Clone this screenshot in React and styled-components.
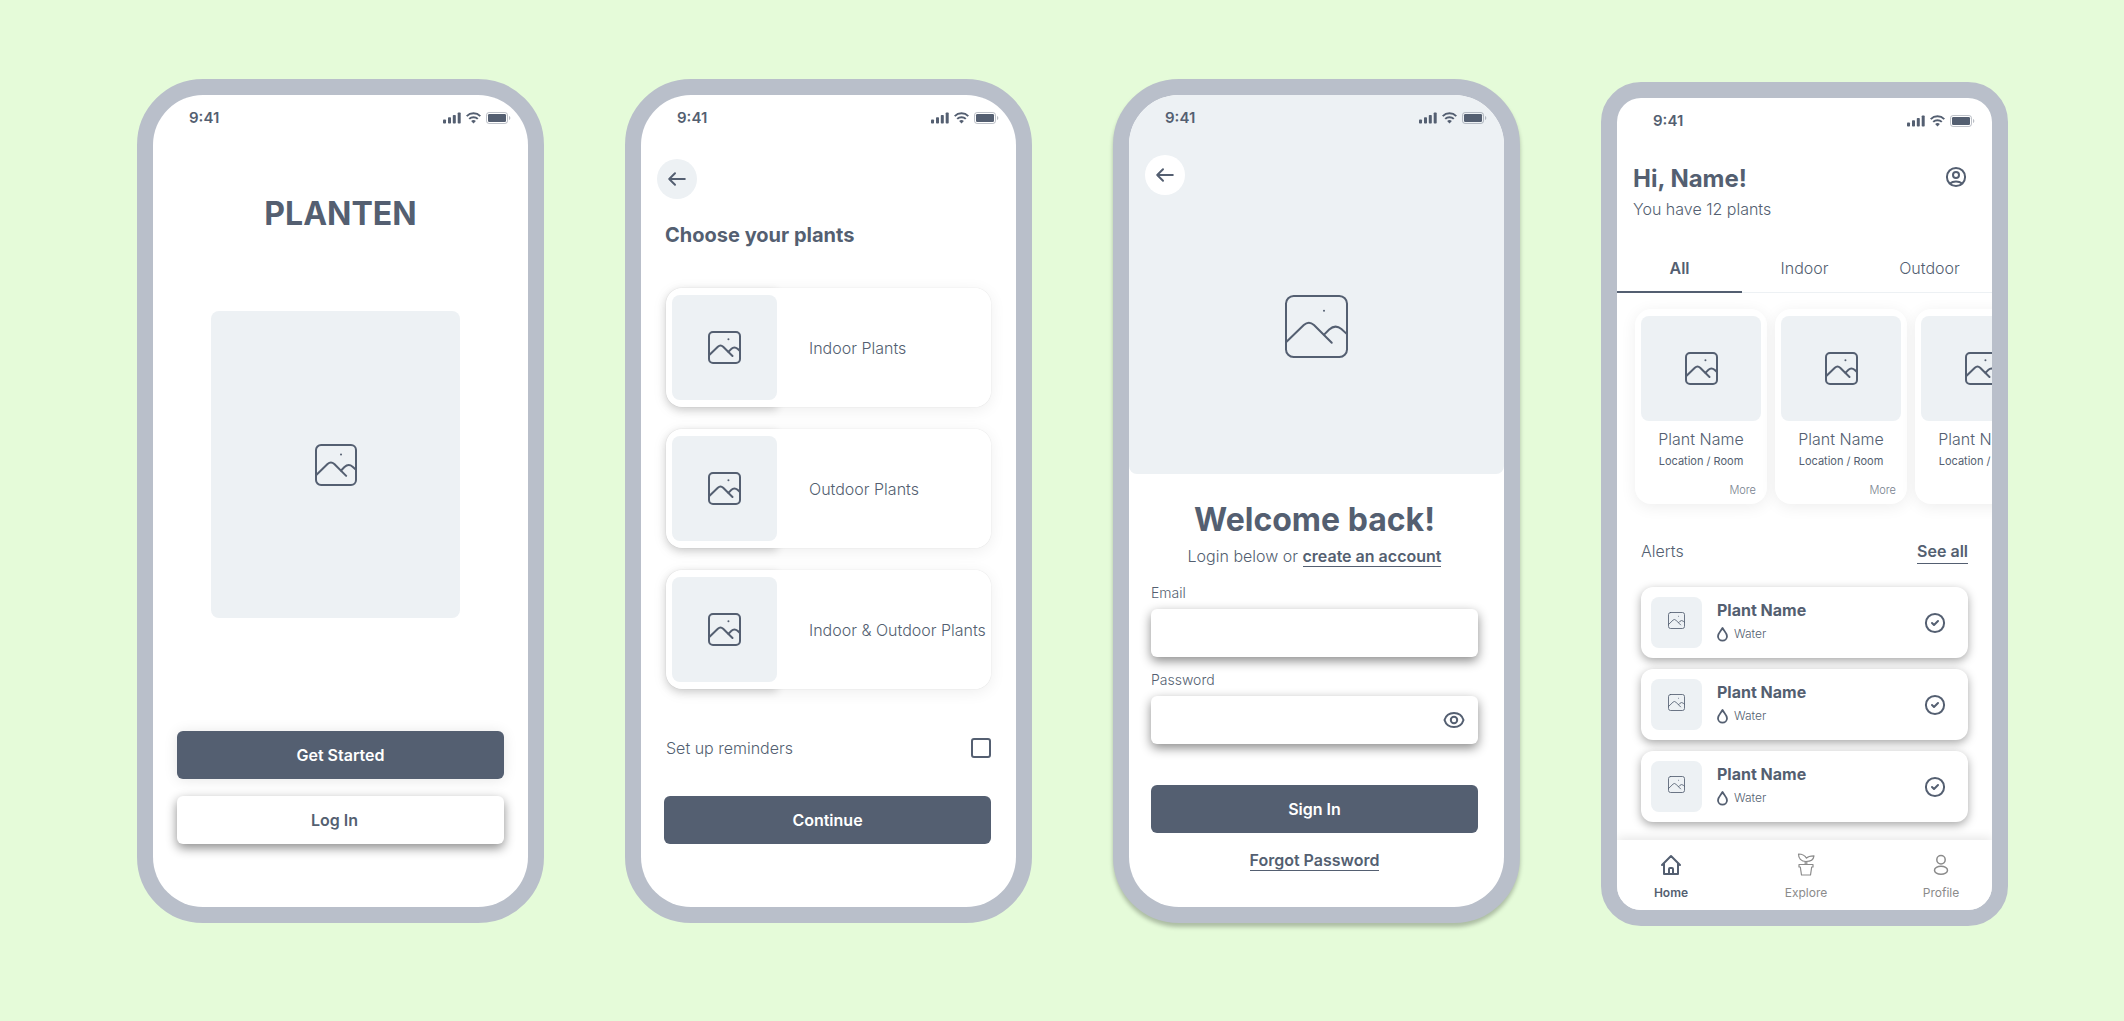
import React, { useState } from "react";
import styled, { createGlobalStyle, css } from "styled-components";

const ink = "#545f71";
const frame = "#b9bfca";
const tint = "#edf1f4";

const GlobalStyle = createGlobalStyle`
  * { box-sizing: border-box; }
  body {
    margin: 0;
    background: #e5fbd9;
    color: ${ink};
    font-family: Inter, "Liberation Sans", sans-serif;
    font-size: 16px;
    line-height: 24px;
  }
  h1, h2, h3, p, ul { margin: 0; padding: 0; }
  button, input { font: inherit; color: inherit; }
`;

const Board = styled.main`
  display: grid;
  grid-template-columns: repeat(auto-fit, minmax(380px, 1fr));
  gap: 81px;
  align-items: start;
  min-height: 100vh;
  padding: 79px 116px 79px 137px;
`;

const Phone = styled.section`
  display: flex;
  min-height: 844px;
  border: 16px solid ${frame};
  border-radius: ${(p) => (p.$square ? "40px" : "66px")};
  background: ${frame};
  margin-top: ${(p) => (p.$square ? "3px" : "0")};
  box-shadow: ${(p) => (p.$raised ? "0 4px 4px rgba(0, 0, 0, 0.25)" : "none")};
`;

const Screen = styled.div`
  display: flex;
  flex-direction: column;
  flex: 1;
  min-width: 0;
  overflow: hidden;
  border-radius: ${(p) => (p.$square ? "24px" : "50px")};
  background: #fff;
`;

const StatusRow = styled.div`
  display: flex;
  align-items: center;
  justify-content: space-between;
  height: 46px;
  padding: 0 17px 0 36px;
  font-size: 15px;
  font-weight: 600;
  flex: none;
`;

const StatusIcons = styled.div`
  display: flex;
  align-items: center;
  gap: 5px;
`;

function StatusBar() {
  return (
    <StatusRow>
      <span>9:41</span>
      <StatusIcons>
        <svg width="18" height="12" viewBox="0 0 18 12" fill={ink} aria-hidden="true">
          <rect x="0" y="7.5" width="3" height="4" rx="0.8" />
          <rect x="5" y="5.3" width="3" height="6.2" rx="0.8" />
          <rect x="9.8" y="3" width="3" height="8.5" rx="0.8" />
          <rect x="14.7" y="0.5" width="3" height="11" rx="0.8" />
        </svg>
        <svg width="15" height="12" viewBox="0 0 15 12" fill="none" stroke={ink} strokeWidth="2" aria-hidden="true">
          <path d="M0.7 4.1a9.8 9.8 0 0 1 13.6 0" />
          <path d="M3.2 6.9a6.2 6.2 0 0 1 8.6 0" />
          <path d="M5.1 9.1a3.5 3.5 0 0 1 4.8 0L7.5 11.4z" fill={ink} stroke="none" />
        </svg>
        <svg width="25" height="12" viewBox="0 0 25 12" aria-hidden="true">
          <rect x="0.5" y="0.5" width="21" height="11" rx="2.6" fill="none" stroke={ink} strokeOpacity="0.38" />
          <rect x="2" y="2" width="18" height="8" rx="1.2" fill={ink} />
          <path d="M23 4v4c.8-.3 1.3-1.1 1.3-2S23.8 4.300 23 4z" fill={ink} fillOpacity="0.4" />
        </svg>
      </StatusIcons>
    </StatusRow>
  );
}

/* Placeholder picture; the outline keeps its weight at every size. */
function Picture({ size, weight = 2, faint }) {
  return (
    <svg width={size} height={size} viewBox="0 0 62 62" fill="none" stroke={ink} strokeLinecap="round" strokeLinejoin="round" strokeOpacity={faint ? 0.85 : 1} aria-hidden="true">
      <g strokeWidth={(weight * 62) / size}>
        <rect x={(weight * 31) / size} y={(weight * 31) / size} width={62 - (weight * 62) / size} height={62 - (weight * 62) / size} rx="7.5" />
        <path d="M1.5 46L18.5 29.5Q23.5 25 28.5 29.5L46 47" />
        <path d="M38.5 39L43.5 34Q49.5 28.5 55.5 33.5L61 38.5" />
        <path d="M38.4 15.5v.01" />
      </g>
    </svg>
  );
}

const Thumb = styled.div`
  display: flex;
  align-items: center;
  justify-content: center;
  flex: none;
  width: ${(p) => p.$w};
  height: ${(p) => p.$h};
  border-radius: 8px;
  background: ${tint};
`;

const deep = "0 4px 11px rgba(0, 0, 0, 0.46)";

const Button = styled.button`
  display: block;
  width: 100%;
  height: 48px;
  padding: 0;
  border: 0;
  border-radius: 6px;
  background: ${ink};
  color: #fff;
  font-weight: 600;
  cursor: pointer;
  ${(p) => p.$glow && css`box-shadow: 0 1px 14px rgba(0, 0, 0, 0.1);`}
  ${(p) => p.$light && css`
    padding-right: 12px;
    background: #fff;
    color: ${ink};
    box-shadow: ${deep};
  `}
`;

const Title = styled.h1`
  font-size: 32px;
  line-height: 40px;
  font-weight: 700;
  text-align: center;
`;

const TextLink = styled.a`
  color: ${ink};
  font-weight: 600;
  text-decoration: none;
  border-bottom: 1px solid ${ink};
`;

/* Welcome */

const Hero = styled.div`
  display: flex;
  margin: 77px 68px 113px 58px;
`;

const Stack = styled.div`
  display: flex;
  flex-direction: column;
  gap: 17px;
  padding: ${(p) => (p.$left ? "0 25px 63px 23px" : "0 24px 63px")};
`;

const TitleBlock = styled.div`
  padding-top: 53px;
`;

function Welcome() {
  return (
    <Phone>
      <Screen>
        <StatusBar />
        <TitleBlock>
          <Title>PLANTEN</Title>
        </TitleBlock>
        <Hero>
          <Thumb $w="100%" $h="307px">
            <Picture size={42} />
          </Thumb>
        </Hero>
        <Stack>
          <Button $glow>Get Started</Button>
          <Button $light>Log In</Button>
        </Stack>
      </Screen>
    </Phone>
  );
}

/* Plant choice */

const BackButton = styled.button`
  display: flex;
  align-items: center;
  justify-content: center;
  width: 40px;
  height: 40px;
  margin: 0 16px;
  padding: 0;
  border: 0;
  border-radius: 50%;
  background: ${(p) => (p.$light ? "#fff" : tint)};
  cursor: pointer;
`;

function Back({ light }) {
  return (
    <BackButton $light={light} aria-label="Back">
      <svg width="24" height="24" viewBox="0 0 24 24" fill="none" stroke={ink} strokeWidth="2" strokeLinecap="round" strokeLinejoin="round" aria-hidden="true">
        <path d="M19.8 12H4.2M10 6.2L4.2 12L10 17.8" />
      </svg>
    </BackButton>
  );
}

const ChooseBody = styled.div`
  display: flex;
  flex-direction: column;
  padding-top: 18px;
`;

const ChooseTitle = styled.h2`
  margin: 24px 24px 0;
  font-size: 20px;
  line-height: 24px;
  font-weight: 700;
`;

const Choices = styled.ul`
  display: grid;
  gap: 22px;
  margin: 41px 25px 0;
  list-style: none;
`;

const Choice = styled.li`
  display: flex;
  height: 119px;
  border-radius: 16px;
  background: #fff;
  box-shadow: 0 3px 16px rgba(0, 0, 0, 0.07), 0 0 1px rgba(0, 0, 0, 0.2);
`;

const ChoicePicture = styled.div`
  display: flex;
  align-items: center;
  flex: none;
  width: 111px;
  padding-left: 6px;
  border-radius: 16px 0 0 16px;
  background: #fff;
  box-shadow: 0 3px 8px rgba(0, 0, 0, 0.16);
`;

const ChoiceName = styled.div`
  display: flex;
  align-items: center;
  flex: 1;
  padding-left: 32px;
  border-radius: 0 16px 16px 0;
  background: #fff;
  font-weight: 300;
  white-space: nowrap;
`;

const Reminder = styled.label`
  display: flex;
  align-items: center;
  justify-content: space-between;
  margin: 47px 25px 36px;
  font-weight: 300;
`;

const Check = styled.input`
  appearance: none;
  width: 20px;
  height: 20px;
  margin: 0;
  border: 2px solid ${ink};
  border-radius: 3px;
  background: #fff;
  &:checked { background: ${ink}; box-shadow: inset 0 0 0 3px #fff; }
`;

function Choose() {
  return (
    <Phone>
      <Screen>
        <StatusBar />
        <ChooseBody>
          <Back />
          <ChooseTitle>Choose your plants</ChooseTitle>
          <Choices>
            {["Indoor Plants", "Outdoor Plants", "Indoor & Outdoor Plants"].map((name) => (
              <Choice key={name}>
                <ChoicePicture>
                  <Thumb $w="105px" $h="105px">
                    <Picture size={33} />
                  </Thumb>
                </ChoicePicture>
                <ChoiceName>{name}</ChoiceName>
              </Choice>
            ))}
          </Choices>
          <Reminder>
            Set up reminders
            <Check type="checkbox" />
          </Reminder>
        </ChooseBody>
        <Stack $left>
          <Button>Continue</Button>
        </Stack>
      </Screen>
    </Phone>
  );
}

/* Sign in */

const Cover = styled.div`
  display: flex;
  flex-direction: column;
  height: 379px;
  border-radius: 0 0 8px 8px;
  background: ${tint};
`;

const CoverNav = styled.div`
  padding-top: 14px;
`;

const CoverPicture = styled.div`
  display: flex;
  justify-content: center;
  padding-top: 100px;
`;

const Form = styled.form`
  display: flex;
  flex-direction: column;
  padding: 26px 26px 0 22px;
`;

const Intro = styled.p`
  margin: 4px 0 2px;
  text-align: center;
  font-weight: 300;
`;

const Field = styled.div`
  display: flex;
  flex-direction: column;
  gap: 6px;
  margin-top: 13px;
`;

const Label = styled.label`
  font-size: 14px;
  line-height: 20px;
  font-weight: 300;
`;

const Box = styled.div`
  display: flex;
  align-items: center;
  height: 48px;
  padding-right: 12px;
  border-radius: 6px;
  background: #fff;
  box-shadow: ${deep};
`;

const Input = styled.input`
  flex: 1;
  min-width: 0;
  height: 100%;
  padding: 0 12px;
  border: 0;
  outline: 0;
  background: none;
`;

const IconButton = styled.button`
  display: flex;
  padding: 0;
  border: 0;
  background: none;
  cursor: pointer;
`;

const Submit = styled.div`
  margin-top: 41px;
`;

const Forgot = styled.p`
  margin-top: 15px;
  text-align: center;
`;

function SignIn() {
  const [shown, setShown] = useState(false);
  return (
    <Phone $raised>
      <Screen>
        <Cover>
          <StatusBar />
          <CoverNav>
            <Back light />
          </CoverNav>
          <CoverPicture>
            <Picture size={63} />
          </CoverPicture>
        </Cover>
        <Form onSubmit={(e) => e.preventDefault()}>
          <Title>Welcome back!</Title>
          <Intro>
            Login below or <TextLink href="#create">create an account</TextLink>
          </Intro>
          <Field>
            <Label htmlFor="email">Email</Label>
            <Box>
              <Input id="email" type="email" />
            </Box>
          </Field>
          <Field>
            <Label htmlFor="password">Password</Label>
            <Box>
              <Input id="password" type={shown ? "text" : "password"} />
              <IconButton type="button" aria-label="Show password" onClick={() => setShown(!shown)}>
                <svg width="24" height="24" viewBox="0 0 24 24" fill="none" stroke={ink} strokeWidth="2" aria-hidden="true">
                  <path d="M2.5 12C3.8 7.8 7.6 5 12 5s8.2 2.8 9.5 7c-1.3 4.2-5.1 7-9.5 7s-8.2-2.8-9.5-7z" strokeLinejoin="round" />
                  <circle cx="12" cy="12" r="3.2" />
                </svg>
              </IconButton>
            </Box>
          </Field>
          <Submit>
            <Button>Sign In</Button>
          </Submit>
          <Forgot>
            <TextLink href="#forgot">Forgot Password</TextLink>
          </Forgot>
        </Form>
      </Screen>
    </Phone>
  );
}

/* Home */

const Greeting = styled.header`
  display: flex;
  justify-content: space-between;
  padding: 21px 24px 0 16px;
`;

const Hello = styled.h2`
  font-size: 24px;
  line-height: 28px;
  font-weight: 700;
`;

const Count = styled.p`
  margin-top: 4px;
  font-weight: 300;
`;

const Tabs = styled.div`
  display: grid;
  grid-template-columns: repeat(3, 1fr);
  margin-top: 33px;
  box-shadow: inset 0 -1px ${tint};
`;

const Tab = styled.button`
  height: 39px;
  padding: 0 0 10px;
  border: 0;
  border-bottom: 2px solid ${(p) => (p.$active ? ink : "transparent")};
  background: none;
  font-weight: ${(p) => (p.$active ? 600 : 300)};
  line-height: 22px;
  cursor: pointer;
`;

const Shelf = styled.div`
  display: flex;
  gap: 8px;
  overflow: hidden;
  padding: 16px 0 24px 18px;
`;

const Card = styled.article`
  display: flex;
  flex-direction: column;
  align-items: center;
  flex: none;
  width: 132px;
  height: 195px;
  padding-top: 7px;
  border-radius: 16px;
  background: #fff;
  box-shadow: 0 3px 16px rgba(0, 0, 0, 0.07);
`;

const CardName = styled.h3`
  margin-top: 6px;
  font-size: 16px;
  line-height: 24px;
  font-weight: 300;
`;

const Place = styled.p`
  margin-top: 2px;
  font-size: 11px;
  line-height: 16px;
  font-weight: 400;
`;

const More = styled.a`
  align-self: flex-end;
  margin: 13px 11px 0 0;
  color: ${ink};
  opacity: 0.8;
  font-size: 11px;
  line-height: 16px;
  font-weight: 300;
  text-decoration: none;
`;

const AlertsHead = styled.div`
  display: flex;
  justify-content: space-between;
  padding: 11px 24px 0;
`;

const AlertsTitle = styled.h3`
  font-size: 16px;
  font-weight: 300;
`;

const Alerts = styled.ul`
  display: grid;
  gap: 11px;
  padding: 23px 24px 18px;
  list-style: none;
`;

const Alert = styled.li`
  display: flex;
  align-items: center;
  height: 71px;
  padding: 0 21px 0 10px;
  border-radius: 12px;
  background: #fff;
  box-shadow: 0 3px 10px rgba(0, 0, 0, 0.35);
`;

const AlertThumb = styled(Thumb)`
  padding-bottom: 4px;
`;

const AlertText = styled.div`
  display: grid;
  gap: 2px;
  flex: 1;
  padding: 0 0 4px 15px;
`;

const AlertName = styled.h4`
  margin: 0;
  font-size: 16px;
  line-height: 24px;
  font-weight: 700;
`;

const Need = styled.p`
  display: flex;
  align-items: center;
  gap: 6px;
  font-size: 12px;
  line-height: 20px;
  font-weight: 300;
`;

const NavBar = styled.nav`
  display: flex;
  justify-content: space-between;
  flex: 1;
  position: relative;
  min-height: 70px;
  padding: 13px 15px 0 18px;
  background: #fff;
  box-shadow: 0 -2px 10px rgba(0, 0, 0, 0.1);
`;

const NavLink = styled.a`
  display: flex;
  flex-direction: column;
  align-items: center;
  gap: 8px;
  width: 72px;
  color: ${(p) => (p.$active ? ink : "#8b8b8b")};
  font-size: 12px;
  line-height: 16px;
  font-weight: ${(p) => (p.$active ? 600 : 400)};
  text-decoration: none;
`;

function NavIcon({ children, weight = 2 }) {
  return (
    <svg width="24" height="24" viewBox="0 0 24 24" fill="none" stroke="currentColor" strokeWidth={weight} strokeLinejoin="round" strokeLinecap="round" aria-hidden="true">
      {children}
    </svg>
  );
}

function Home() {
  const [tab, setTab] = useState("All");
  return (
    <Phone $square>
      <Screen $square>
        <StatusBar />
        <Greeting>
          <div>
            <Hello>Hi, Name!</Hello>
            <Count>You have 12 plants</Count>
          </div>
          <div>
            <IconButton aria-label="Account">
              <svg width="24" height="24" viewBox="0 0 24 24" fill="none" stroke={ink} strokeWidth="2" aria-hidden="true">
                <circle cx="12" cy="12" r="9.1" />
                <circle cx="12" cy="10" r="3" />
                <path d="M5.8 18.6c1.700-1.300 3.900-2 6.200-2s4.500.7 6.200 2" />
              </svg>
            </IconButton>
          </div>
        </Greeting>
        <Tabs role="tablist">
          {["All", "Indoor", "Outdoor"].map((name) => (
            <Tab key={name} role="tab" aria-selected={tab === name} $active={tab === name} onClick={() => setTab(name)}>
              {name}
            </Tab>
          ))}
        </Tabs>
        <Shelf>
          {[1, 2, 3].map((id) => (
            <Card key={id}>
              <Thumb $w="120px" $h="105px">
                <Picture size={33} />
              </Thumb>
              <CardName>Plant Name</CardName>
              <Place>Location / Room</Place>
              <More href="#more">More</More>
            </Card>
          ))}
        </Shelf>
        <AlertsHead>
          <AlertsTitle>Alerts</AlertsTitle>
          <TextLink href="#alerts">See all</TextLink>
        </AlertsHead>
        <Alerts>
          {[1, 2, 3].map((id) => (
            <Alert key={id}>
              <AlertThumb $w="51px" $h="51px">
                <Picture size={17} weight={1} faint />
              </AlertThumb>
              <AlertText>
                <AlertName>Plant Name</AlertName>
                <Need>
                  <svg width="11" height="16" viewBox="0 0 11 16" fill="none" stroke={ink} strokeWidth="1.8" strokeLinejoin="round" aria-hidden="true">
                    <path d="M5.5 2C4.3 4.500 1 7 1 10.200a4.500 4.500 0 0 0 9 0C10 7 6.700 4.500 5.500 2z" />
                  </svg>
                  Water
                </Need>
              </AlertText>
              <IconButton aria-label="Mark done">
                <svg width="24" height="24" viewBox="0 0 24 24" fill="none" stroke={ink} strokeWidth="2" strokeLinecap="round" strokeLinejoin="round" aria-hidden="true">
                  <circle cx="12" cy="12" r="9.1" />
                  <path d="M9 12l2 2 4-4" />
                </svg>
              </IconButton>
            </Alert>
          ))}
        </Alerts>
        <NavBar>
          <NavLink href="#home" $active>
            <NavIcon>
              <path d="M3 12l9-9 9 9M5 10.500V21h14V10.500M10 21v-5a1 1 0 0 1 1-1h2a1 1 0 0 1 1 1v5" />
            </NavIcon>
            Home
          </NavLink>
          <NavLink href="#explore">
            <NavIcon weight={1.2}>
              <path d="M5 11.500h14v2.500h-1.300L16.500 22h-9L6.300 14H5zM11.200 11.500V8.500M12.800 11.500V8.500" />
              <path d="M12 8.500C7 8.500 4.500 5.500 4.500 1C8.500 1 11 2.500 12.500 5.200C14 3.200 16.500 2.800 20 2.800C19.500 6.500 16.500 8.500 12 8.500z" />
            </NavIcon>
            Explore
          </NavLink>
          <NavLink href="#profile">
            <NavIcon weight={1.5}>
              <circle cx="12" cy="6.700" r="4.200" />
              <ellipse cx="12" cy="17.300" rx="6.500" ry="4" />
            </NavIcon>
            Profile
          </NavLink>
        </NavBar>
      </Screen>
    </Phone>
  );
}

export default function App() {
  return (
    <>
      <GlobalStyle />
      <Board>
        <Welcome />
        <Choose />
        <SignIn />
        <Home />
      </Board>
    </>
  );
}
